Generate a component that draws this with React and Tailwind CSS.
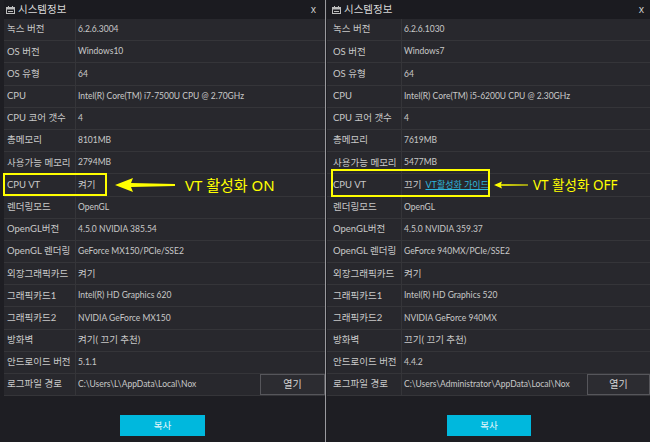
import React from 'react';

const leftRows = [
  ['녹스 버전', '6.2.6.3004'],
  ['OS 버전', 'Windows10'],
  ['OS 유형', '64'],
  ['CPU', 'Intel(R) Core(TM) i7-7500U CPU @ 2.70GHz'],
  ['CPU 코어 갯수', '4'],
  ['총메모리', '8101MB'],
  ['사용가능 메모리', '2794MB'],
  ['CPU VT', '켜기'],
  ['렌더링모드', 'OpenGL'],
  ['OpenGL버전', '4.5.0 NVIDIA 385.54'],
  ['OpenGL 렌더링', 'GeForce MX150/PCIe/SSE2'],
  ['외장그래픽카드', '켜기'],
  ['그래픽카드1', 'Intel(R) HD Graphics 620'],
  ['그래픽카드2', 'NVIDIA GeForce MX150'],
  ['방화벽', '켜기( 끄기 추천)'],
  ['안드로이드 버전', '5.1.1'],
  ['로그파일 경로', 'C:\\Users\\L\\AppData\\Local\\Nox'],
];

const rightRows = [
  ['녹스 버전', '6.2.6.1030'],
  ['OS 버전', 'Windows7'],
  ['OS 유형', '64'],
  ['CPU', 'Intel(R) Core(TM) i5-6200U CPU @ 2.30GHz'],
  ['CPU 코어 갯수', '4'],
  ['총메모리', '7619MB'],
  ['사용가능 메모리', '5477MB'],
  ['CPU VT', 'VT'],
  ['렌더링모드', 'OpenGL'],
  ['OpenGL버전', '4.5.0 NVIDIA 359.37'],
  ['OpenGL 렌더링', 'GeForce 940MX/PCIe/SSE2'],
  ['외장그래픽카드', '켜기'],
  ['그래픽카드1', 'Intel(R) HD Graphics 520'],
  ['그래픽카드2', 'NVIDIA GeForce 940MX'],
  ['방화벽', '끄기( 끄기 추천)'],
  ['안드로이드 버전', '4.4.2'],
  ['로그파일 경로', 'C:\\Users\\Administrator\\AppData\\Local\\Nox'],
];

const font = { fontFamily: '"Noto Sans", "Noto Sans CJK KR", sans-serif' };
const rowFont = { fontFamily: 'Lato, "Noto Sans CJK KR", sans-serif' };
const hangul = /[가-힣]/;

function TitleIcon() {
  return (
    <svg width="9" height="8" viewBox="0 0 9 8" className="mr-[3px]">
      <rect x="0.5" y="1.5" width="8" height="6" fill="none" stroke="#bdbdbd" />
      <rect x="0.5" y="1.5" width="8" height="2" fill="#bdbdbd" />
      <rect x="2" y="0" width="1" height="2" fill="#bdbdbd" />
      <rect x="6" y="0" width="1" height="2" fill="#bdbdbd" />
      <rect x="2" y="5" width="5" height="1" fill="#bdbdbd" />
    </svg>
  );
}

function Panel({ rows, labelW, padL, closeRight, btnLeft, btnW, openW, right }) {
  return (
    <div className="flex flex-col h-full w-full min-w-0 overflow-hidden bg-[#1e1e23]">
      <div className="h-[19px] flex items-center bg-[#1b1b20] text-[#d8d8d8] text-[10.5px]" style={{ paddingLeft: padL - 1 }}>
        <TitleIcon />
        <span>시스템정보</span>
        <span className="ml-auto text-[10px] text-[#cfcfcf]" style={{ marginRight: closeRight }}>x</span>
      </div>
      <div className="flex flex-col" style={rowFont}>
        {rows.map(([label, value], i) => (
          <div key={i} className="h-[22.2px] flex border-b border-[#353539] bg-[#28282d] text-[#c9c9c9]">
            <div className="flex items-center border-r border-[#353539] shrink-0 text-[9.5px]" style={{ width: labelW, paddingLeft: padL }}>
              {label}
            </div>
            <div className="flex items-center pl-[2px] flex-1 min-w-0 whitespace-nowrap text-[8.5px]">
              {right && label === 'CPU VT' ? (
                <>
                  <span className="text-[9.5px]">끄기</span>
                  <span className="ml-[4px] text-[9px] text-[#2fb6dd] underline">VT활성화 가이드</span>
                </>
              ) : (
                <span className={hangul.test(value) ? 'text-[9.5px]' : ''}>{value}</span>
              )}
              {label === '로그파일 경로' && (
                <div className="ml-auto h-[21px] flex items-center justify-center bg-[#2c2c31] border border-[#56565b] text-[#d5d5d5] text-[10px] shrink-0" style={{ width: openW }}>
                  열기
                </div>
              )}
            </div>
          </div>
        ))}
      </div>
      <div className="flex-1 pt-[19px]">
        <div className="h-[21px] flex items-center justify-center bg-[#00b8dd] text-[#e8f8fc] text-[9.5px]" style={{ marginLeft: btnLeft, width: btnW }}>
          복사
        </div>
      </div>
    </div>
  );
}

export default function App() {
  return (
    <div className="relative w-[650px] h-[442px] flex bg-[#1e1e23] overflow-hidden" style={font}>
      <div className="w-[325px] h-full pl-[4px] shrink-0">
        <Panel rows={leftRows} labelW={72} padL={3} closeRight={9} btnLeft={116} btnW={85} openW={65} />
      </div>
      <div className="w-[1px] h-full bg-[#9a9a9e] shrink-0" />
      <div className="w-[1px] h-full bg-[#1e1e23] shrink-0" />
      <div className="w-[323px] h-full shrink-0 min-w-0">
        <Panel rows={rightRows} labelW={75} padL={6} closeRight={6} btnLeft={120} btnW={84} openW={63} right />
      </div>

      {/* left annotation */}
      <div className="absolute left-[3px] top-[173px] w-[104px] h-[23px] border-2 border-[#ffff00]" />
      <svg className="absolute left-[115px] top-[177px]" width="62" height="16" viewBox="0 0 62 16">
        <polygon points="0,8 18,1 16,6 60,7 60,9 16,10 18,15" fill="#ffff00" />
      </svg>
      <div className="absolute left-[185px] top-[176px] text-[15px] leading-[18px] text-[#ffff00]">VT 활성화 ON</div>

      {/* right annotation */}
      <div className="absolute left-[331px] top-[169px] w-[159px] h-[28px] border-2 border-[#ffff00]" />
      <svg className="absolute left-[494px] top-[181px]" width="34" height="8" viewBox="0 0 34 8">
        <polygon points="0,4 8,0.5 7,3.3 34,3.5 34,4.5 7,4.7 8,7.5" fill="#ffff00" />
      </svg>
      <div className="absolute left-[533px] top-[176px] text-[13.5px] leading-[18px] text-[#ffff00]">VT 활성화 OFF</div>
    </div>
  );
}
